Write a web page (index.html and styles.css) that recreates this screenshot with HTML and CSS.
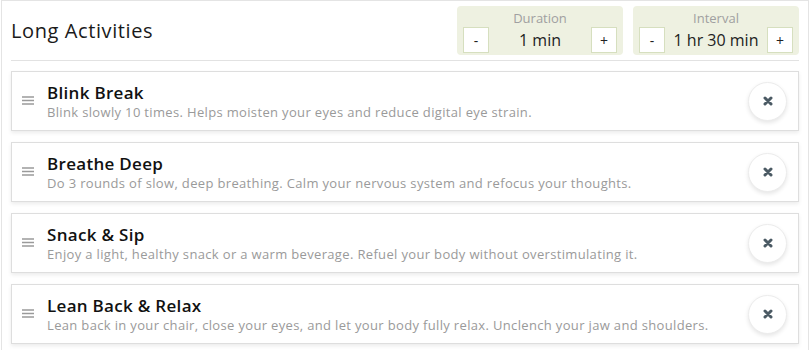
FILE: index.html
```html
<!DOCTYPE html>
<html lang="en">
<head>
    <meta charset="UTF-8">
    <meta name="viewport" content="width=device-width, initial-scale=1.0">
    <title>Long Activities</title>
    <link rel="stylesheet" href="styles.css">
</head>
<body>
    <div class="panel">
        <div class="panel-header">
            <h2>Long Activities</h2>
            <div class="steppers">
                <div class="stepper">
                    <span class="stepper-label">Duration</span>
                    <div class="stepper-row">
                        <button>-</button>
                        <span class="stepper-value">1 min</span>
                        <button>+</button>
                    </div>
                </div>
                <div class="stepper">
                    <span class="stepper-label">Interval</span>
                    <div class="stepper-row">
                        <button>-</button>
                        <span class="stepper-value">1 hr 30 min</span>
                        <button>+</button>
                    </div>
                </div>
            </div>
        </div>

        <div class="activity-list">
            <div class="activity">
                <svg class="handle" width="12" height="10" viewBox="0 0 12 10"><path d="M0 1h12M0 4.5h12M0 8h12" stroke="#9a9a9a" stroke-width="1.6"/></svg>
                <div class="activity-text">
                    <div class="activity-title">Blink Break</div>
                    <div class="activity-desc">Blink slowly 10 times. Helps moisten your eyes and reduce digital eye strain.</div>
                </div>
                <button class="remove"><svg width="10" height="10" viewBox="0 0 10 10"><path d="M2 2l6 6M8 2l-6 6" stroke="#4b5a64" stroke-width="3" stroke-linecap="round"/></svg></button>
            </div>
            <div class="activity">
                <svg class="handle" width="12" height="10" viewBox="0 0 12 10"><path d="M0 1h12M0 4.5h12M0 8h12" stroke="#9a9a9a" stroke-width="1.6"/></svg>
                <div class="activity-text">
                    <div class="activity-title">Breathe Deep</div>
                    <div class="activity-desc">Do 3 rounds of slow, deep breathing. Calm your nervous system and refocus your thoughts.</div>
                </div>
                <button class="remove"><svg width="10" height="10" viewBox="0 0 10 10"><path d="M2 2l6 6M8 2l-6 6" stroke="#4b5a64" stroke-width="3" stroke-linecap="round"/></svg></button>
            </div>
            <div class="activity">
                <svg class="handle" width="12" height="10" viewBox="0 0 12 10"><path d="M0 1h12M0 4.5h12M0 8h12" stroke="#9a9a9a" stroke-width="1.6"/></svg>
                <div class="activity-text">
                    <div class="activity-title">Snack &amp; Sip</div>
                    <div class="activity-desc">Enjoy a light, healthy snack or a warm beverage. Refuel your body without overstimulating it.</div>
                </div>
                <button class="remove"><svg width="10" height="10" viewBox="0 0 10 10"><path d="M2 2l6 6M8 2l-6 6" stroke="#4b5a64" stroke-width="3" stroke-linecap="round"/></svg></button>
            </div>
            <div class="activity">
                <svg class="handle" width="12" height="10" viewBox="0 0 12 10"><path d="M0 1h12M0 4.5h12M0 8h12" stroke="#9a9a9a" stroke-width="1.6"/></svg>
                <div class="activity-text">
                    <div class="activity-title">Lean Back &amp; Relax</div>
                    <div class="activity-desc">Lean back in your chair, close your eyes, and let your body fully relax. Unclench your jaw and shoulders.</div>
                </div>
                <button class="remove"><svg width="10" height="10" viewBox="0 0 10 10"><path d="M2 2l6 6M8 2l-6 6" stroke="#4b5a64" stroke-width="3" stroke-linecap="round"/></svg></button>
            </div>
        </div>
    </div>
</body>
</html>
```

FILE: styles.css
```css
body {
    font-family: "Open Sans", "Liberation Sans", sans-serif;
    margin: 0;
    background: white;
    color: #111;
    overflow: hidden;
}
.panel {
    margin: 0 1px;
    border: 1px solid #e4e4e4;
    border-bottom: none;
    padding: 5px 9px 10px;
    height: 350px;
    box-sizing: border-box;
    overflow: hidden;
}
.panel-header {
    display: flex;
    align-items: center;
    justify-content: space-between;
    padding-bottom: 5px;
    border-bottom: 1px solid #e2e2e2;
}
.panel-header h2 {
    margin: 0;
    font-size: 20px;
    font-weight: 400;
    letter-spacing: 0.6px;
    color: #1a1a1a;
}
.steppers {
    display: flex;
    gap: 10px;
}
.stepper {
    width: 154px;
    background: #eef1e1;
    border-radius: 4px;
    padding: 3px 6px 2px;
    display: flex;
    flex-direction: column;
    align-items: center;
}
.stepper-label {
    font-size: 13px;
    color: #a0a0a0;
    line-height: 18px;
}
.stepper-row {
    display: flex;
    align-items: center;
    width: 100%;
}
.stepper-row button {
    width: 26px;
    height: 26px;
    border: 1px solid #d6dfbf;
    background: white;
    font-family: inherit;
    font-size: 14px;
    color: #222;
    padding: 0;
    cursor: pointer;
}
.stepper-value {
    flex: 1;
    text-align: center;
    font-size: 16px;
    color: #222;
}
.activity-list {
    display: flex;
    flex-direction: column;
    gap: 11px;
    margin-top: 10px;
}
.activity {
    display: flex;
    align-items: center;
    height: 58px;
    border: 1px solid #dedede;
    box-shadow: 0 2px 4px rgba(0,0,0,0.08);
    padding: 0 11px 0 10px;
}
.handle {
    margin-right: 13px;
    flex-shrink: 0;
}
.activity-text {
    flex: 1;
}
.activity-title {
    font-size: 17px;
    font-weight: 600;
    line-height: 21px;
    letter-spacing: 0.3px;
    color: #111;
}
.activity-desc {
    font-size: 13px;
    color: #9a9a9a;
    line-height: 18px;
    letter-spacing: 0.34px;
}
.remove {
    width: 39px;
    height: 39px;
    border-radius: 50%;
    border: 1px solid #ececec;
    background: white;
    box-shadow: 0 2px 4px rgba(0,0,0,0.1);
    display: flex;
    align-items: center;
    justify-content: center;
    padding: 0;
    cursor: pointer;
}
```
